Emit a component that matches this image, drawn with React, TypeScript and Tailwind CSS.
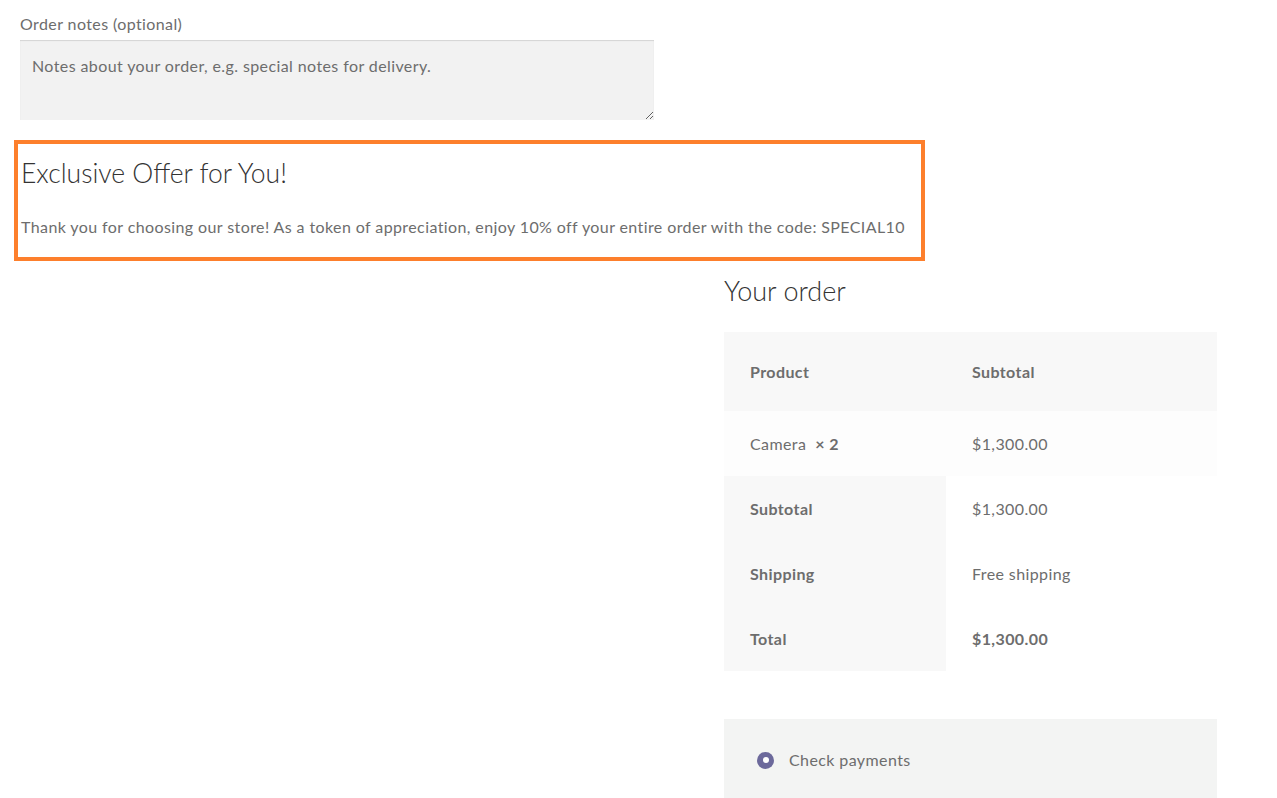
const font = { fontFamily: "Lato, 'Open Sans', sans-serif" };

const totals = [
  { label: "Subtotal", value: "$1,300.00", bold: false },
  { label: "Shipping", value: "Free shipping", bold: false },
  { label: "Total", value: "$1,300.00", bold: true },
];

export default function App() {
  return (
    <div className="min-h-[798px] w-[1277px] bg-white text-[16px] tracking-[0.4px] text-[#6d6d6d]" style={font}>
      <div className="pl-5 pt-3">
        <label className="block leading-6 mb-1">Order notes (optional)</label>
        <textarea
          className="block h-20 w-[634px] bg-[#f2f2f2] px-3 py-[14px] leading-6 tracking-[0.4px] text-[#6d6d6d] placeholder:text-[#6d6d6d] shadow-[inset_0_1px_1px_rgba(0,0,0,0.125)] outline-none"
          placeholder="Notes about your order, e.g. special notes for delivery."
        />
      </div>

      <div className="ml-[14px] mt-5 w-[911px] border-4 border-[#fd7f2c] pl-[3px] pt-[11px] pb-[18px]">
        <h2 className="text-[26.5px] font-light leading-9 tracking-normal text-[#333333]">Exclusive Offer for You!</h2>
        <p className="mt-6 leading-6">
          Thank you for choosing our store! As a token of appreciation, enjoy 10% off your entire order with the code: SPECIAL10
        </p>
      </div>

      <div className="flex justify-end pr-[60px]">
        <div className="w-[493px]">
          <h3 className="mt-3 text-[27px] font-light leading-9 tracking-normal text-[#333333]">Your order</h3>

          <div className="mt-[23px]">
            <div className="grid h-[79px] grid-cols-[222px_1fr] items-center bg-[#f8f8f8] font-bold">
              <div className="pl-[26px]">Product</div>
              <div className="pl-[26px]">Subtotal</div>
            </div>
            <div className="grid h-[65px] grid-cols-[222px_1fr] items-center bg-[#fdfdfd]">
              <div className="pl-[26px]">
                Camera&nbsp; <span className="font-bold">× 2</span>
              </div>
              <div className="pl-[26px]">$1,300.00</div>
            </div>
            {totals.map((row) => (
              <div key={row.label} className="grid h-[65px] grid-cols-[222px_1fr]">
                <div className="flex items-center bg-[#f8f8f8] pl-[26px] font-bold">{row.label}</div>
                <div className={`flex items-center pl-[26px] ${row.bold ? "font-bold" : ""}`}>{row.value}</div>
              </div>
            ))}
          </div>

          <div className="mt-12 h-[80px] bg-[#f3f4f3] pl-[33px] pt-[29px]">
            <label className="flex items-center gap-[15px] leading-6">
              <span className="flex h-[17px] w-[17px] items-center justify-center rounded-full bg-[#6c699b]">
                <span className="h-[6px] w-[6px] rounded-full bg-white" />
              </span>
              Check payments
            </label>
          </div>
        </div>
      </div>
    </div>
  );
}
